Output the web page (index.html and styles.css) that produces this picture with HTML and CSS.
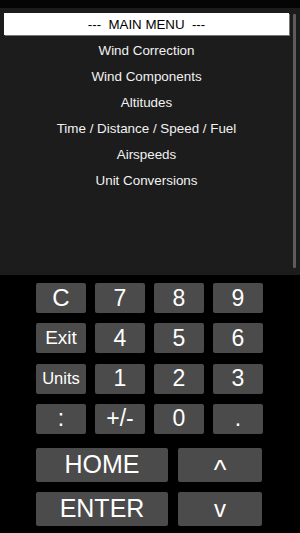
FILE: index.html
```html
<!DOCTYPE html>
<html>
<head>
<meta charset="utf-8">
<link rel="stylesheet" href="styles.css">
</head>
<body>
<div class="screen">
  <div class="top-strip"></div>
  <div class="panel">
    <div class="menu">
      <div class="menu-header">---  MAIN MENU  ---</div>
      <div class="menu-item">Wind Correction</div>
      <div class="menu-item">Wind Components</div>
      <div class="menu-item">Altitudes</div>
      <div class="menu-item">Time / Distance / Speed / Fuel</div>
      <div class="menu-item">Airspeeds</div>
      <div class="menu-item">Unit Conversions</div>
    </div>
    <div class="scrollbar"></div>
  </div>
  <div class="keypad">
    <div class="keys">
      <div class="key key-c">C</div>
      <div class="key">7</div>
      <div class="key">8</div>
      <div class="key">9</div>
      <div class="key key-exit">Exit</div>
      <div class="key">4</div>
      <div class="key">5</div>
      <div class="key">6</div>
      <div class="key key-units">Units</div>
      <div class="key">1</div>
      <div class="key">2</div>
      <div class="key">3</div>
      <div class="key">:</div>
      <div class="key">+/-</div>
      <div class="key">0</div>
      <div class="key">.</div>
    </div>
    <div class="big-keys">
      <div class="key big">HOME</div>
      <div class="key big caret">^</div>
      <div class="key big">ENTER</div>
      <div class="key big vee">v</div>
    </div>
  </div>
</div>
</body>
</html>
```
FILE: styles.css
```css
html, body {
  margin: 0;
  padding: 0;
  background: #000;
}
.screen {
  width: 300px;
  height: 533px;
  overflow: hidden;
  font-family: "Liberation Sans", Arial, sans-serif;
  color: #fff;
  background: #000;
  display: flex;
  flex-direction: column;
}
.top-strip {
  height: 8px;
  background: #050505;
}
.panel {
  position: relative;
  height: 267px;
  background: #1c1c1c;
}
.menu {
  padding: 5px 11px 0 4px;
}
.menu-header {
  height: 22px;
  background: #fff;
  color: #000;
  font-size: 13.3px;
  white-space: pre;
  display: flex;
  align-items: center;
  justify-content: center;
  box-shadow: 1px 1px 0 #777;
  margin-bottom: 2px;
}
.menu-item {
  height: 26px;
  font-size: 13.4px;
  color: #f2f2f2;
  display: flex;
  align-items: center;
  justify-content: center;
}
.scrollbar {
  position: absolute;
  left: 293px;
  top: 6px;
  width: 3px;
  height: 254px;
  background: #5c5c5c;
  border-radius: 1px;
}
.keypad {
  padding: 8px 0 0 36px;
  display: flex;
  flex-direction: column;
}
.keys {
  display: grid;
  grid-template-columns: repeat(4, 50px);
  grid-auto-rows: 30px;
  column-gap: 9px;
  row-gap: 10.3px;
}
.key {
  background: #4b4b4b;
  border-radius: 2px;
  display: flex;
  align-items: center;
  justify-content: center;
  font-size: 23px;
  color: #fff;
}
.key-c {
  font-size: 24px;
}
.key-exit {
  font-size: 19px;
}
.key-units {
  font-size: 16.5px;
}
.big-keys {
  margin-top: 14px;
  display: grid;
  grid-template-columns: 132px 84px;
  grid-auto-rows: 34px;
  column-gap: 10px;
  row-gap: 10px;
}
.big {
  font-size: 25px;
}
.caret {
  font-size: 27px;
  padding-top: 12px;
  box-sizing: border-box;
}
.vee {
  font-size: 24px;
}
```
